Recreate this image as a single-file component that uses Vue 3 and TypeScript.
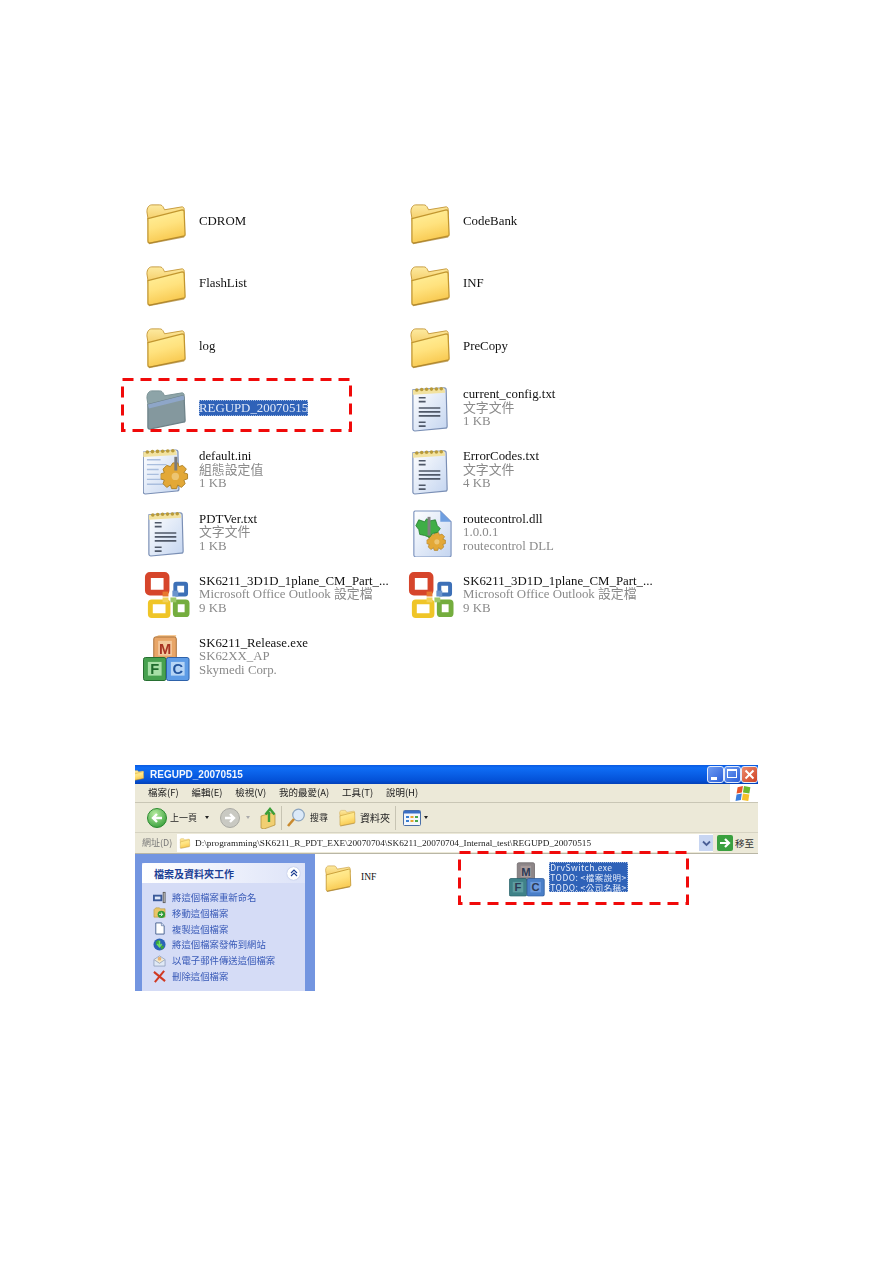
<script setup lang="ts">
interface FileItem {
  icon: string
  name: string
  lines: string[]
  selected?: boolean
  marked?: boolean
}

const items: FileItem[] = [
  { icon: 'folder', name: 'CDROM', lines: [] },
  { icon: 'folder', name: 'CodeBank', lines: [] },
  { icon: 'folder', name: 'FlashList', lines: [] },
  { icon: 'folder', name: 'INF', lines: [] },
  { icon: 'folder', name: 'log', lines: [] },
  { icon: 'folder', name: 'PreCopy', lines: [] },
  { icon: 'folderdim', name: 'REGUPD_20070515', lines: [], selected: true, marked: true },
  { icon: 'note', name: 'current_config.txt', lines: ['文字文件', '1 KB'] },
  { icon: 'ini', name: 'default.ini', lines: ['組態設定值', '1 KB'] },
  { icon: 'note', name: 'ErrorCodes.txt', lines: ['文字文件', '4 KB'] },
  { icon: 'note', name: 'PDTVer.txt', lines: ['文字文件', '1 KB'] },
  { icon: 'dll', name: 'routecontrol.dll', lines: ['1.0.0.1', 'routecontrol DLL'] },
  { icon: 'office', name: 'SK6211_3D1D_1plane_CM_Part_...', lines: ['Microsoft Office Outlook 設定檔', '9 KB'] },
  { icon: 'office', name: 'SK6211_3D1D_1plane_CM_Part_...', lines: ['Microsoft Office Outlook 設定檔', '9 KB'] },
  { icon: 'mfc', name: 'SK6211_Release.exe', lines: ['SK62XX_AP', 'Skymedi Corp.'] },
]

const menus = ['檔案(F)', '編輯(E)', '檢視(V)', '我的最愛(A)', '工具(T)', '說明(H)']

const tasks = [
  { icon: 'rename', label: '將這個檔案重新命名' },
  { icon: 'move', label: '移動這個檔案' },
  { icon: 'copy', label: '複製這個檔案' },
  { icon: 'web', label: '將這個檔案發佈到網站' },
  { icon: 'mail', label: '以電子郵件傳送這個檔案' },
  { icon: 'del', label: '刪除這個檔案' },
]
</script>

<template>
  <div class="page">
    <svg class="defs" width="0" height="0" aria-hidden="true">
      <defs>
        <linearGradient id="gFolder" x1="0" y1="0" x2="0.3" y2="1">
          <stop offset="0" stop-color="#fff2a0" />
          <stop offset="0.55" stop-color="#ffe27e" />
          <stop offset="1" stop-color="#f8c950" />
        </linearGradient>
        <linearGradient id="gTab" x1="0" y1="0" x2="0" y2="1">
          <stop offset="0" stop-color="#fdeaa0" />
          <stop offset="1" stop-color="#f2c557" />
        </linearGradient>
        <linearGradient id="gPage" x1="0" y1="0" x2="1" y2="1">
          <stop offset="0" stop-color="#ffffff" />
          <stop offset="1" stop-color="#c4d5f0" />
        </linearGradient>
        <radialGradient id="gGreen" cx="0.4" cy="0.3" r="0.8">
          <stop offset="0" stop-color="#b8eca0" />
          <stop offset="1" stop-color="#2f9a35" />
        </radialGradient>
      </defs>
      <symbol id="folder" viewBox="0 0 48 48">
        <path d="M4 13c0-4 2-7 5-7h8c2 0 3 1 4 3l1 2 18-3c1 0 2 1 2 2v6L6 26z" fill="url(#gTab)" stroke="#c89c3e" />
        <path d="M5 20l35-9c1 0 2 0 2 2l1 23c0 1-1 2-2 2L7 45c-1 0-2-1-2-2z" fill="url(#gFolder)" stroke="#c2962f" stroke-width="1.3" />
        <path d="M6 45.500l36-7" stroke="#a9812c" stroke-width="1.600" opacity=".7" />
      </symbol>
      <symbol id="folderdim" viewBox="0 0 48 48">
        <path d="M4 13c0-4 2-7 5-7h8c2 0 3 1 4 3l1 2 18-3c1 0 2 1 2 2v6L6 26z" fill="#8da4a8" stroke="#7b9296" />
        <path d="M5 20l35-9c1 0 2 0 2 2l1 23c0 1-1 2-2 2L7 45c-1 0-2-1-2-2z" fill="#84989e" stroke="#6d8288" stroke-width="1.3" />
        <path d="M5 20l35-9c1 0 2 0 2 2v2L6 24z" fill="#8ea6c8" />
      </symbol>
      <symbol id="notebase" viewBox="0 0 48 48" preserveAspectRatio="none">
        <path d="M6 5l32-2c1 0 2 1 2 2l1 37c0 1-1 2-2 2L8 47c-1 0-2-1-2-2z" fill="url(#gPage)" stroke="#7a8fb5" stroke-width="1.2" />
        <path d="M6 5l32-2 1 5-33 2z" fill="#f2e2a0" />
        <g fill="#b89a3a">
          <circle cx="10" cy="5" r="1.8" /><circle cx="15" cy="4.6" r="1.8" /><circle cx="20" cy="4.4" r="1.8" />
          <circle cx="25" cy="4.2" r="1.8" /><circle cx="30" cy="4" r="1.8" /><circle cx="35" cy="3.8" r="1.8" />
        </g>
      </symbol>
      <symbol id="note" viewBox="0 0 48 48">
        <use href="#notebase" width="48" height="48" />
        <g stroke="#4f5868" stroke-width="1.7">
          <path d="M12 13h7M12 17h7M12 23.500h22M12 27.500h22M12 31.500h22M12 38h7M12 42h7" />
        </g>
      </symbol>
      <symbol id="gearO" viewBox="0 0 24 24">
        <path d="M10 1h4l1 3 3-1 3 3-2 3 3 1v4l-3 1 1 3-3 3-3-2-1 3h-4l-1-3-3 2-3-3 1-3-3-1v-4l3-1-1-3 3-3 3 1z" fill="#e3a837" stroke="#b0832a" stroke-width=".8" stroke-linejoin="round" />
        <circle cx="12" cy="12" r="3" fill="#edc572" />
      </symbol>
      <symbol id="ini" viewBox="0 0 48 48">
        <use href="#notebase" x="-6" y="-1" width="50" height="49" />
        <g stroke="#a9bede" stroke-width="1.4"><path d="M4 12h14M4 17h20M4 22h12M4 27h12M4 32h18M4 37h18" /></g>
        <use href="#gearO" x="18" y="14" width="30" height="30" />
        <rect x="32" y="9" width="3" height="14" fill="#7a7a7a" />
      </symbol>
      <symbol id="dll" viewBox="0 0 48 48">
        <path d="M8 1h26l11 11v34c0 1-1 2-2 2H9c-1 0-2-1-2-2V2z" fill="url(#gPage)" stroke="#7f95bf" stroke-width="1.2" />
        <path d="M34 1l11 11H34z" fill="#6f9fe0" />
        <use href="#gearO" x="20" y="22" width="21" height="21" />
        <path d="M12 10l6 2 2-3 4 2 5-1 2 6 3 3-3 4-5 1-3 4-5-2-5-1-1-5-3-4z" fill="#3fae46" stroke="#237a2c" stroke-width=".8" />
        <rect x="21" y="7" width="3" height="19" fill="#808080" />
      </symbol>
      <symbol id="office" viewBox="0 0 48 48">
        <rect x="5" y="3" width="19" height="18" rx="2" fill="#fff" stroke="#d6452b" stroke-width="6" />
        <rect x="33" y="12" width="11" height="11" rx="1" fill="#fff" stroke="#3d70b7" stroke-width="4" />
        <rect x="7.500" y="30.500" width="18" height="14" rx="1.500" fill="#fff" stroke="#efc528" stroke-width="5" />
        <rect x="33" y="30.500" width="12" height="13" rx="1.500" fill="#fff" stroke="#74ad3e" stroke-width="5" />
        <rect x="20" y="20" width="6" height="5" fill="#e8782f" />
        <rect x="30" y="19" width="6" height="6" fill="#6a93cc" />
        <rect x="20" y="26" width="6" height="5" fill="#f2d25a" />
        <rect x="28" y="26" width="6" height="5" fill="#9ec86a" />
      </symbol>
      <symbol id="mfc" viewBox="0 0 48 48">
        <path d="M11 4l5-3h18l-1 4z" fill="#f7ca96" />
        <rect x="11" y="3" width="23" height="24" rx="2" fill="#e8a668" stroke="#a96f36" />
        <rect x="0.500" y="24" width="23" height="23.500" rx="2" fill="#47a14f" stroke="#256d2e" />
        <rect x="24" y="24" width="23" height="23.500" rx="2" fill="#5e9ce6" stroke="#2b5fa8" />
        <rect x="5" y="28.500" width="14" height="14" fill="#a7dfa6" />
        <rect x="28.500" y="28.500" width="14" height="14" fill="#b6d5f6" />
        <rect x="15.500" y="7" width="14" height="15" fill="#f3c89c" />
      </symbol>
      <symbol id="mfcdim" viewBox="0 0 48 48">
        <rect x="11" y="3" width="23" height="24" rx="2" fill="#8d8688" stroke="#6b6668" />
        <rect x="0.500" y="24" width="23" height="23.500" rx="2" fill="#3f8288" stroke="#2a6068" />
        <rect x="24" y="24" width="23" height="23.500" rx="2" fill="#4a7fc8" stroke="#2c5a9a" />
        <rect x="15.500" y="7" width="14" height="15" fill="#a89a9a" />
        <rect x="5" y="28.500" width="14" height="14" fill="#5e9ca0" />
        <rect x="28.500" y="28.500" width="14" height="14" fill="#6c9ade" />
      </symbol>
      <symbol id="rename" viewBox="0 0 14 14"><rect x="0" y="4" width="10" height="7" fill="#3b5a9a" /><rect x="2" y="6" width="6" height="3" fill="#dfe8fa" /><path d="M10.500 1h3v12h-3z" fill="#555" /><path d="M11.500 2h1v10h-1z" fill="#ddd" /></symbol>
      <symbol id="move" viewBox="0 0 14 14"><path d="M1 4l2-2h4l1 1h5v9H1z" fill="#e9c568" stroke="#a58428" stroke-width=".5" /><circle cx="9" cy="9" r="4" fill="#2f9a35" /><path d="M6.500 9h3.500M8.500 7l2 2-2 2" stroke="#fff" stroke-width="1" fill="none" /></symbol>
      <symbol id="copy" viewBox="0 0 14 14"><path d="M3 1h6l3 3v9H3z" fill="#fff" stroke="#46608f" /><path d="M9 1v3h3" fill="#cfdcf2" stroke="#46608f" stroke-width=".6" /></symbol>
      <symbol id="web" viewBox="0 0 14 14"><circle cx="7" cy="7" r="6.500" fill="#2b62b8" /><path d="M3 4l3-2 2 3-2 3-3-1zM8 9l3-1 1 2-3 3z" fill="#3aa33f" /><path d="M7 3v6M4.500 6.500L7 9.500l2.500-3" stroke="#6fe05f" stroke-width="1.600" fill="none" /></symbol>
      <symbol id="mail" viewBox="0 0 14 14"><path d="M1 6l6-4 6 4v7H1z" fill="#dfe8f6" stroke="#7f90ad" stroke-width=".7" /><path d="M1 6l6 4 6-4" fill="#f6e9c8" stroke="#7f90ad" stroke-width=".7" /><circle cx="7" cy="5" r="2" fill="#e8b270" /></symbol>
      <symbol id="del" viewBox="0 0 14 14"><path d="M1 2l12 10M12 1L2 13" stroke="#d03a24" stroke-width="2.200" /></symbol>
    </svg>

    <section class="files">
      <div v-for="(item, i) in items" :key="i" class="file" :class="{ marked: item.marked }">
        <svg class="file-icon" viewBox="0 0 48 48">
          <use :href="'#' + item.icon" width="48" height="48" />
          <g v-if="item.icon === 'mfc'">
            <text x="22.500" y="20" class="block block-m">M</text>
            <text x="12" y="40.500" class="block block-f">F</text>
            <text x="35.500" y="40.500" class="block block-c">C</text>
          </g>
        </svg>
        <div class="file-text">
          <div class="file-name" :class="{ selected: item.selected }">{{ item.name }}</div>
          <div v-for="line in item.lines" :key="line" class="file-sub">{{ line }}</div>
        </div>
        <svg v-if="item.marked" class="dash dash-a" width="231" height="54">
          <rect x="1.500" y="1.500" width="228" height="51" />
        </svg>
      </div>
    </section>

    <section class="window">
      <header class="titlebar">
        <svg class="title-icon" viewBox="0 0 48 48"><use href="#folder" width="48" height="48" /></svg>
        <span class="title-text">REGUPD_20070515</span>
        <div class="title-btns">
          <span class="wbtn"><i class="min"></i></span>
          <span class="wbtn"><i class="max"></i></span>
          <span class="wbtn close">
            <svg viewBox="0 0 17 17"><path d="M4 4l9 9M13 4l-9 9" stroke="#fff" stroke-width="2.200" /></svg>
          </span>
        </div>
      </header>

      <div class="menubar">
        <div class="menus">
          <span v-for="m in menus" :key="m" class="menu">{{ m }}</span>
        </div>
        <div class="flag">
          <svg width="20" height="17" viewBox="0 0 18 16">
            <path d="M3 2l5-1-1 6-5 1z" fill="#e8552a" /><path d="M9 1l6 1-1 6-6-1z" fill="#6cb82f" />
            <path d="M2 9l5-1-1 6-5 1z" fill="#3c7fdc" /><path d="M8 8l6 1-1 6-6-1z" fill="#f6c02a" />
          </svg>
        </div>
      </div>

      <div class="toolbar">
        <svg class="tb-back" width="20" height="20" viewBox="0 0 20 20">
          <circle cx="10" cy="10" r="9.500" fill="url(#gGreen)" stroke="#2c8a30" />
          <path d="M15 10H7M10 6l-4 4 4 4" stroke="#fff" stroke-width="2.400" fill="none" />
        </svg>
        <span class="tb-label back-label">上一頁</span>
        <span class="caret first-caret"></span>
        <svg class="tb-fwd" width="20" height="20" viewBox="0 0 20 20">
          <circle cx="10" cy="10" r="9.500" fill="#c9c9c2" stroke="#a9a9a3" />
          <path d="M5 10h8M10 6l4 4-4 4" stroke="#fff" stroke-width="2.400" fill="none" />
        </svg>
        <span class="caret dim"></span>
        <svg class="tb-up" width="17" height="22" viewBox="0 0 17 22">
          <path d="M1 9l10-3 4 1v11l-11 4-3-1z" fill="#f1cf72" stroke="#b08b33" stroke-width=".7" />
          <path d="M9 15V5M5.500 7.500L10 2l4.500 5.500" stroke="#3b9f37" stroke-width="2.400" fill="none" />
        </svg>
        <i class="tb-sep"></i>
        <svg class="tb-search" width="20" height="20" viewBox="0 0 20 20">
          <circle cx="12.500" cy="7" r="5.800" fill="#dbe9f8" stroke="#8ba4bf" stroke-width="1.200" />
          <path d="M8 11l-6 7" stroke="#c98a2e" stroke-width="2.600" />
        </svg>
        <span class="tb-label search-label">搜尋</span>
        <svg class="tb-folder" viewBox="0 0 48 48" width="19" height="19"><use href="#folder" width="48" height="48" /></svg>
        <span class="tb-label folder-label">資料夾</span>
        <i class="tb-sep second"></i>
        <svg class="tb-view" width="18" height="16" viewBox="0 0 18 16">
          <rect x=".5" y=".5" width="17" height="15" rx="1" fill="#f4f7fc" stroke="#4a6fa8" />
          <rect x="1" y="1" width="16" height="2.500" fill="#3a6fc4" />
          <path d="M3 6h3v2H3zM3 10h3v2H3z" fill="#3a7fd0" /><path d="M7.500 6h3v2h-3zM7.500 10h3v2h-3z" fill="#e8a52e" /><path d="M12 6h3v2h-3zM12 10h3v2h-3z" fill="#4aa84a" />
        </svg>
        <span class="caret"></span>
      </div>

      <div class="addressbar">
        <span class="addr-label">網址(D)</span>
        <div class="addr-box">
          <svg viewBox="0 0 48 48" width="12" height="12"><use href="#folder" width="48" height="48" /></svg>
          <span class="addr-text">D:\programming\SK6211_R_PDT_EXE\20070704\SK6211_20070704_Internal_test\REGUPD_20070515</span>
          <span class="addr-drop">
            <svg width="9" height="7" viewBox="0 0 9 7"><path d="M1 1.500l3.500 3.500L8 1.500" stroke="#4a5f95" stroke-width="1.800" fill="none" /></svg>
          </span>
        </div>
        <svg width="16" height="16" viewBox="0 0 16 16">
          <rect width="16" height="16" rx="2" fill="#3aa03f" />
          <path d="M3 8h8M8 4l4 4-4 4" stroke="#fff" stroke-width="2.200" fill="none" />
        </svg>
        <span class="go-label">移至</span>
      </div>

      <div class="content">
        <aside class="sidebar">
          <div class="task-card">
            <div class="task-head">
              <span>檔案及資料夾工作</span>
              <span class="collapse">
                <svg width="8" height="8" viewBox="0 0 8 8"><path d="M1 4l3-3 3 3M1 7l3-3 3 3" stroke="#1c3f94" stroke-width="1.100" fill="none" /></svg>
              </span>
            </div>
            <ul class="tasks">
              <li v-for="t in tasks" :key="t.icon" class="task">
                <svg width="13" height="13"><use :href="'#' + t.icon" /></svg>
                <span>{{ t.label }}</span>
              </li>
            </ul>
          </div>
        </aside>
        <div class="pane">
          <div class="pane-folder">
            <svg viewBox="0 0 48 48" width="31" height="31"><use href="#folder" width="48" height="48" /></svg>
            <span>INF</span>
          </div>
          <div class="pane-exe">
            <svg class="exe-icon" viewBox="0 0 48 48" width="36" height="37">
              <use href="#mfcdim" width="48" height="48" />
              <text x="22.500" y="20" class="block block-dim">M</text>
              <text x="12" y="40.500" class="block block-dim">F</text>
              <text x="35.500" y="40.500" class="block block-dim">C</text>
            </svg>
            <div class="exe-label">
              <div>DrvSwitch.exe</div>
              <div>TODO: &lt;檔案說明&gt;</div>
              <div>TODO: &lt;公司名稱&gt;</div>
            </div>
            <svg class="dash dash-b" width="231" height="54">
              <rect x="1.500" y="1.500" width="228" height="51" />
            </svg>
          </div>
        </div>
      </div>
    </section>
  </div>
</template>

<style scoped>
.page {
  position: relative;
  width: 893px;
  height: 1263px;
  box-sizing: border-box;
  padding: 192px 0 0 143px;
  background: #fff;
  overflow: hidden;
  font-family: "Liberation Serif", "Noto Sans CJK TC", serif;
}
.defs {
  position: absolute;
}
.block {
  font: bold 15px "Liberation Sans", sans-serif;
  text-anchor: middle;
}
.block-m { fill: #a83222; }
.block-f { fill: #1f6b2c; }
.block-c { fill: #22549e; }
.block-dim { fill: #2c3a55; }

.files {
  display: grid;
  grid-template-columns: 264px 264px;
  grid-auto-rows: 62.15px;
}
.file {
  position: relative;
  display: flex;
  align-items: center;
  gap: 9px;
}
.file-icon {
  width: 47px;
  height: 47px;
  flex: none;
  margin-top: -1px;
  filter: blur(0.3px);
}
.file-text {
  margin-top: -2px;
  font-size: 12.850px;
  line-height: 13.5px;
  filter: blur(0.35px);
}
.file-name {
  color: #111;
  white-space: nowrap;
}
.file-name.selected {
  background: #2f62b8;
  color: #dfe8f8;
  outline: 1px dotted #9fb8e0;
  outline-offset: -1px;
  line-height: 16px;
}
.file-sub {
  color: #8a8a8a;
  white-space: nowrap;
}
.dash {
  position: absolute;
  pointer-events: none;
}
.dash rect {
  fill: none;
  stroke: #f00a0a;
  stroke-width: 3;
  stroke-dasharray: 11 7;
}
.dash-a {
  left: -22px;
  top: 0;
}

.window {
  display: flex;
  flex-direction: column;
  width: 623px;
  height: 226px;
  margin: 76px 0 0 -8px;
  background: #fff;
  font-family: "Noto Sans CJK TC", "Liberation Sans", sans-serif;
}
.titlebar {
  display: flex;
  align-items: center;
  height: 19px;
  flex: none;
  overflow: hidden;
  background: linear-gradient(#0a5ae0, #0f6df5 15%, #0452d8 80%, #0340b8);
}
.title-icon {
  width: 12px;
  height: 12px;
  margin-left: -2px;
  flex: none;
}
.title-text {
  margin-left: 5px;
  color: #f2f6fd;
  font: bold 10px "Liberation Sans", sans-serif;
  filter: blur(0.2px);
}
.title-btns {
  display: flex;
  margin-left: auto;
}
.wbtn {
  position: relative;
  display: block;
  width: 17px;
  height: 17px;
  border: 1px solid #e4ecfb;
  border-radius: 3px;
  box-sizing: border-box;
  background: linear-gradient(135deg, #6f9cf2, #2c5fd8);
}
.wbtn .min {
  position: absolute;
  left: 3px;
  bottom: 2px;
  width: 6px;
  height: 3px;
  background: #fff;
}
.wbtn .max {
  position: absolute;
  left: 2px;
  top: 2px;
  width: 10px;
  height: 9px;
  border: 1px solid #fff;
  border-top-width: 2px;
  box-sizing: border-box;
}
.wbtn.close {
  background: linear-gradient(135deg, #ec8a6c, #cf4326);
}
.wbtn.close svg {
  display: block;
  width: 15px;
  height: 15px;
}
.menubar {
  display: flex;
  align-items: stretch;
  height: 19px;
  flex: none;
  background: #ece9d8;
  border-bottom: 1px solid #c9c6b5;
  box-sizing: border-box;
}
.menus {
  display: flex;
  align-items: center;
  padding: 0 0 2px 13px;
  font-size: 9.500px;
  color: #222;
}
.menu {
  margin-right: 12.800px;
  filter: blur(0.25px);
}
.flag {
  display: flex;
  align-items: center;
  justify-content: center;
  width: 28px;
  margin-left: auto;
  background: #fff;
}
.toolbar {
  display: flex;
  align-items: center;
  height: 30px;
  flex: none;
  padding-left: 12px;
  background: #ece9d8;
  border-bottom: 1px solid #d6d3c2;
  box-sizing: border-box;
}
.tb-label {
  font-size: 9px;
  color: #222;
  filter: blur(0.25px);
}
.back-label { margin-left: 3px; }
.caret {
  width: 0;
  height: 0;
  margin-left: 3px;
  border: 2.500px solid transparent;
  border-top: 3px solid #222;
  border-bottom: 0;
}
.first-caret { margin-left: 8px; }
.caret.dim {
  margin-left: 6px;
  border-top-color: #aaa;
}
.tb-fwd { margin-left: 11px; }
.tb-up { margin-left: 10px; }
.tb-sep {
  width: 1px;
  height: 24px;
  margin: 0 4px;
  background: #c7c4b3;
}
.tb-sep.second { margin: 0 7px 0 5px; }
.search-label { margin: 0 10px 0 4px; }
.folder-label { margin-left: 3px; font-size: 10px; }
.addressbar {
  display: flex;
  align-items: center;
  height: 21px;
  flex: none;
  padding-left: 7px;
  background: #ece9d8;
  border-bottom: 1px solid #b9b6a5;
  box-sizing: border-box;
}
.addr-label {
  width: 35px;
  flex: none;
  padding-bottom: 2px;
  font-size: 9px;
  color: #777;
  filter: blur(0.2px);
}
.addr-box {
  display: flex;
  align-items: center;
  width: 536px;
  height: 18px;
  margin-right: 4px;
  padding-left: 2px;
  box-sizing: border-box;
  background: #fff;
}
.addr-text {
  margin-left: 4px;
  font: 9.250px "Liberation Serif", serif;
  color: #222;
  white-space: nowrap;
  filter: blur(0.25px);
}
.addr-drop {
  display: flex;
  align-items: center;
  justify-content: center;
  width: 14px;
  height: 16px;
  margin-left: auto;
  background: #c8d6f2;
}
.go-label {
  margin-left: 2px;
  font-size: 9.500px;
  color: #333;
}
.content {
  display: flex;
  flex: 1;
  min-height: 0;
}
.sidebar {
  width: 180px;
  flex: none;
  box-sizing: border-box;
  padding: 9px 10px 0 7px;
  background: #7395e0;
}
.task-card {
  height: 100%;
  background: #d5dcf6;
}
.task-head {
  display: flex;
  align-items: center;
  justify-content: space-between;
  height: 20px;
  padding: 0 5px 0 12px;
  background: linear-gradient(90deg, #ffffff, #dde3f8);
  color: #1c3f94;
  font-size: 10px;
  font-weight: 700;
  border-radius: 3px 3px 0 0;
}
.collapse {
  display: flex;
  align-items: center;
  justify-content: center;
  width: 13px;
  height: 13px;
  border-radius: 50%;
  background: #fff;
  box-shadow: 0 0 1px #7d8fc8;
}
.tasks {
  margin: 0;
  padding: 6px 0 0 11px;
  list-style: none;
}
.task {
  display: flex;
  align-items: center;
  gap: 6px;
  height: 15.800px;
  color: #3a5bb8;
  font-size: 9.400px;
  white-space: nowrap;
  filter: blur(0.2px);
}
.pane {
  display: flex;
  flex: 1;
  padding: 8px 0 0 8px;
  background: #fff;
}
.pane-folder {
  display: flex;
  align-items: center;
  gap: 7px;
  height: 30px;
  font: 9.500px "Liberation Serif", serif;
  color: #111;
}
.pane-exe {
  position: relative;
  display: flex;
  align-items: flex-start;
  gap: 4px;
  height: 37px;
  margin: -2px 0 0 133px;
}
.exe-label {
  height: 30px;
  margin-top: 2px;
  padding: 0 1px;
  background: #2f62b8;
  outline: 1px dotted #9fb8e0;
  outline-offset: -1px;
  color: #e6edfb;
  font-size: 8.500px;
  letter-spacing: 0.45px;
  white-space: nowrap;
  filter: blur(0.2px);
}
.exe-label div {
  height: 10px;
  line-height: 10px;
}
.dash-b {
  left: -51px;
  top: -9px;
}
</style>
